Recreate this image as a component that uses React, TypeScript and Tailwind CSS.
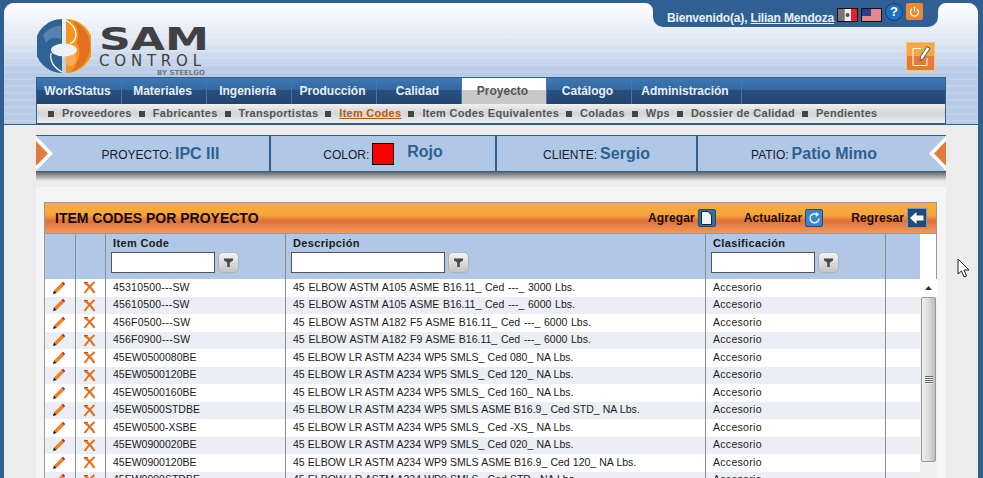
import React from "react";

const navItems = [
  { t: "WorkStatus", w: "w-[85px]" },
  { t: "Materiales", w: "w-[85px]" },
  { t: "Ingeniería", w: "w-[85px]" },
  { t: "Producción", w: "w-[85px]" },
  { t: "Calidad", w: "w-[85px]" },
  { t: "Proyecto", w: "w-[85px]", active: true },
  { t: "Catálogo", w: "w-[85px]" },
  { t: "Administración", w: "w-[110px]" },
];
const subItems = ["Proveedores", "Fabricantes", "Transportistas", "Item Codes", "Item Codes Equivalentes", "Coladas", "Wps", "Dossier de Calidad", "Pendientes"];
const rows = [
  ["45310500---SW", "45 ELBOW ASTM A105 ASME B16.11_ Ced ---_ 3000 Lbs."],
  ["45610500---SW", "45 ELBOW ASTM A105 ASME B16.11_ Ced ---_ 6000 Lbs."],
  ["456F0500---SW", "45 ELBOW ASTM A182 F5 ASME B16.11_ Ced ---_ 6000 Lbs."],
  ["456F0900---SW", "45 ELBOW ASTM A182 F9 ASME B16.11_ Ced ---_ 6000 Lbs."],
  ["45EW0500080BE", "45 ELBOW LR ASTM A234 WP5 SMLS_ Ced 080_ NA Lbs."],
  ["45EW0500120BE", "45 ELBOW LR ASTM A234 WP5 SMLS_ Ced 120_ NA Lbs."],
  ["45EW0500160BE", "45 ELBOW LR ASTM A234 WP5 SMLS_ Ced 160_ NA Lbs."],
  ["45EW0500STDBE", "45 ELBOW LR ASTM A234 WP5 SMLS ASME B16.9_ Ced STD_ NA Lbs."],
  ["45EW0500-XSBE", "45 ELBOW LR ASTM A234 WP5 SMLS_ Ced -XS_ NA Lbs."],
  ["45EW0900020BE", "45 ELBOW LR ASTM A234 WP9 SMLS_ Ced 020_ NA Lbs."],
  ["45EW0900120BE", "45 ELBOW LR ASTM A234 WP9 SMLS ASME B16.9_ Ced 120_ NA Lbs."],
  ["45EW0900STDBE", "45 ELBOW LR ASTM A234 WP9 SMLS_ Ced STD_ NA Lbs."],
];

function Logo() {
  return (
    <div className="flex items-start">
      <svg width="54" height="54" viewBox="0 0 54 54" className="mt-[16px] ml-[33px] shrink-0">
        <path d="M25 0 A27 27 0 0 0 25 54 Z" fill="#2e6396" />
        <path d="M6 16 Q14 6 24 7 L24 20 Q14 16 9 24 Z" fill="#5583ae" />
        <path d="M29 0 A27 27 0 0 1 29 54 Z" fill="#f7941d" />
        <path d="M36 2 Q44 12 40 24 Q47 36 34 53 A27 27 0 0 0 36 2 Z" fill="#e2701f" />
        <ellipse cx="33" cy="40" rx="6" ry="7" fill="#f9b678" opacity="0.7" />
        <ellipse cx="27" cy="31" rx="13" ry="6.5" fill="#eef2f8" />
        <path d="M29 1 Q42 10 38 20 Q37 23 33 24.5" stroke="#fff" strokeWidth="1.2" fill="none" />
        <path d="M14 34 Q12 46 25 53" stroke="#fff" strokeWidth="1.2" fill="none" />
      </svg>
      <div className="ml-[8px] mt-[20px] w-[106px] flex flex-col text-[#414042] font-['DejaVu_Sans',sans-serif]">
        <span className="text-[32px] h-[32px] leading-[32px] font-bold origin-left scale-x-[1.38] whitespace-nowrap">SAM</span>
        <span className="text-[15px] leading-[13px] tracking-[4.8px] whitespace-nowrap">CONTROL</span>
        <span className="text-[7px] leading-[7px] mt-[2px] font-bold text-right text-[#77787b] whitespace-nowrap">BY STEELGO</span>
      </div>
    </div>
  );
}

function FilterButton() {
  return (
    <div className="w-[21px] h-[21px] rounded-[5px] border border-[#aeb3b8] bg-gradient-to-b from-[#f4f4f4] to-[#c4c4c4] flex items-center justify-center shrink-0">
      <svg width="11" height="11" viewBox="0 0 11 11">
        <path d="M1 1.5 H10 V3.5 L6.8 5.5 V10 H4.2 V5.5 L1 3.5 Z" fill="#4a4a4a" />
      </svg>
    </div>
  );
}

function Pencil() {
  return (
    <svg width="14" height="14" viewBox="0 0 14 14">
      <path d="M2 9.5 L9.5 2 L12 4.5 L4.5 12 Z" fill="#f2801f" />
      <path d="M9.5 2 L11 .8 L13.2 3 L12 4.5 Z" fill="#a8321a" />
      <path d="M2 9.5 L1 13 L4.5 12 Z" fill="#111" />
    </svg>
  );
}
function Cross() {
  return (
    <svg width="13" height="13" viewBox="0 0 13 13">
      <path d="M1.5 1.5 Q7 5 11.5 12 M11.5 1 Q6 5.5 1.5 12" stroke="#e2701c" strokeWidth="2.1" fill="none" />
      <path d="M1 1.5 H5" stroke="#b9560f" strokeWidth="1" />
    </svg>
  );
}

function InfoCell({ label, value, cls, children }: { label: string; value: string; cls: string; children?: React.ReactNode }) {
  return (
    <div className={`${cls} h-full flex items-center justify-center gap-[3px]`}>
      <span className="text-[12px] text-[#1a1a2a] mt-[3px]">{label}</span>
      {children}
      {value ? <span className="text-[16px] font-bold text-[#2f6091]">{value}</span> : null}
    </div>
  );
}

function ToolButton({ label, children, cls }: { label: string; children: React.ReactNode; cls: string }) {
  return (
    <div className={`flex items-center gap-[3px] ${cls}`}>
      <span className="text-[12px] font-bold tracking-[0.1px] text-[#1a0a00]">{label}</span>
      {children}
    </div>
  );
}

export default function App() {
  return (
    <div className="w-[983px] h-[478px] overflow-hidden bg-[#2f6091] pl-[4px] pr-[5px] pt-[3px] font-['Liberation_Sans',Arial,sans-serif]">
      <div className="w-[974px] h-[475px] relative flex flex-col bg-[#ececec] rounded-tl-[10px] rounded-tr-[10px] overflow-hidden">
        {/* Header */}
        <div className="h-[122px] shrink-0 relative border-b border-[#2f6091] bg-[repeating-linear-gradient(transparent_0,transparent_5px,rgba(255,255,255,0.12)_5px,rgba(255,255,255,0.12)_7px),linear-gradient(#ffffff_0,#dce5f2_33%,#b8cbe6_58%,#b8cbe6_100%)]">
          <div className="h-[74px] flex justify-between">
            <Logo />
            <div className="flex flex-col items-end">
              <div className="relative mt-[-3px] mr-[40px] w-[285px] h-[27px] bg-[#2f6091] rounded-b-[10px] flex items-center pl-[14px] text-[12px] font-bold text-[#e8f0fa]">
                <svg width="8" height="8" viewBox="0 0 8 8" className="absolute left-[-8px] top-[3px]">
                  <path d="M0 0 H8 V8 A8 8 0 0 0 0 0 Z" fill="#2f6091" />
                </svg>
                <svg width="8" height="8" viewBox="0 0 8 8" className="absolute right-[-8px] top-[3px]">
                  <path d="M8 0 H0 V8 A8 8 0 0 1 8 0 Z" fill="#2f6091" />
                </svg>
                <span className="mt-[9px] whitespace-nowrap tracking-[-0.17px]">Bienvenido(a), <span className="underline">Lilian Mendoza</span></span>
                <svg width="21" height="14" viewBox="0 0 21 14" className="ml-[3px] mt-[3px] shrink-0">
                  <rect width="21" height="14" fill="#111" />
                  <rect x="1" y="1" width="6.5" height="12" fill="#777" />
                  <rect x="7.5" y="1" width="6.5" height="12" fill="#eee" />
                  <rect x="14" y="1" width="6" height="12" fill="#e81f2c" />
                  <circle cx="10.5" cy="7" r="2" fill="#6b4a3a" />
                </svg>
                <svg width="21" height="14" viewBox="0 0 21 14" className="ml-[3px] mt-[3px] shrink-0">
                  <rect width="21" height="14" fill="#111" />
                  <rect x="1" y="1" width="19" height="12" fill="#eee" />
                  <path d="M1 2 H20 M1 4 H20 M1 6 H20 M1 8 H20 M1 10 H20 M1 12 H20" stroke="#d92030" strokeWidth="1" />
                  <rect x="1" y="1" width="9" height="7" fill="#2a3f90" />
                </svg>
                <div className="ml-[3px] w-[18px] h-[18px] rounded-full bg-[#1d6fc0] border border-[#123c70] text-white text-[13px] leading-[16px] text-center shrink-0 mt-[-3px]">?</div>
                <div className="ml-[3px] w-[17px] h-[17px] rounded-[2px] bg-[#ed8a2e] flex items-center justify-center shrink-0 mt-[-4px]">
                  <svg width="11" height="11" viewBox="0 0 11 11" fill="none" stroke="#fff" strokeWidth="1.2">
                    <path d="M5.5 1 V5.5 M3 3 A4 4 0 1 0 8 3" />
                  </svg>
                </div>
              </div>
              <div className="mt-[15px] mr-[43px] w-[29px] h-[29px] border border-[#fcc36d] bg-gradient-to-b from-[#f5a742] from-50% to-[#e27c3c] to-50% flex items-center justify-center">
                <svg width="22" height="24" viewBox="0 0 22 24" fill="none">
                  <path d="M3 3.5 H11 M3 3.5 V20.5 H17 V13" stroke="#fff" strokeWidth="1" />
                  <path d="M17 1.5 L20 3.5 L13 14 L10 15.5 L10.5 11.5 Z" fill="#fff" stroke="#333" strokeWidth="0.8" />
                </svg>
              </div>
            </div>
          </div>
          {/* Nav */}
          <div className="ml-[32px] w-[910px] h-[47px] border border-[#2f6091] flex flex-col">
            <div className="h-[26px] shrink-0 flex bg-[linear-gradient(#3e78b6_0,#33689f_45%,#28507f_45%,#23466f_100%)]">
              {navItems.map((n) => (
                <div
                  key={n.t}
                  className={`${n.w} h-full pr-[3px] border-r border-[#3e78b6] flex items-center justify-center text-[12px] font-bold ${n.active ? "bg-gradient-to-b from-white from-45% to-[#c8c8c8] to-45% text-[#555]" : "text-[#e6eff9]"}`}
                >
                  {n.t}
                </div>
              ))}
            </div>
            <div className="flex-1 flex items-center bg-gradient-to-b from-[#f0f0f0] via-[#d4d4d4] to-[#efefef] pl-[11px] text-[11px] font-bold tracking-[0.28px] text-[#555]">
              {subItems.map((s) => (
                <div key={s} className="flex items-center whitespace-nowrap">
                  <span className="w-[6px] h-[6px] bg-[#444] mr-[8px]" />
                  <span className={`mr-[7px] ${s === "Item Codes" ? "text-[#b85c10] underline" : ""}`}>{s}</span>
                </div>
              ))}
            </div>
          </div>
        </div>
        {/* Info strip */}
        <div className="ml-[32px] mt-[10px] w-[910px] h-[37px] shrink-0 relative flex bg-[#b0c8e6] border-y border-[#2f6091]">
          <InfoCell label="PROYECTO:" value="IPC III" cls="w-[235px] pl-[16px] border-r-[2px] border-[#2f6091]" />
          <InfoCell label="COLOR:" value="" cls="w-[226px] border-r-[2px] border-[#2f6091]">
            <span className="w-[22px] h-[22px] bg-[#ff0000] border border-black" />
            <span className="text-[16px] font-bold text-[#2f6091] ml-[10px] mt-[-3px]">Rojo</span>
          </InfoCell>
          <InfoCell label="CLIENTE:" value="Sergio" cls="w-[201px] border-r-[2px] border-[#2f6091]" />
          <InfoCell label="PATIO:" value="Patio Mimo" cls="w-[248px] pr-[16px]" />
          <div className="absolute left-0 top-0 h-full w-[18px]">
            <svg width="18" height="35" viewBox="0 0 18 35">
              <path d="M0 0 L17 17.5 L0 35 Z" fill="#fff" />
              <path d="M0 5 L12 17.5 L0 30 Z" fill="#e27c3c" />
            </svg>
          </div>
          <div className="absolute right-0 top-0 h-full w-[18px]">
            <svg width="18" height="35" viewBox="0 0 18 35">
              <path d="M18 0 L1 17.5 L18 35 Z" fill="#fff" />
              <path d="M18 5 L6 17.5 L18 30 Z" fill="#e27c3c" />
            </svg>
          </div>
        </div>
        <div className="ml-[32px] w-[910px] h-[9px] shrink-0 bg-gradient-to-b from-[#666] to-[#ececec]" />
        {/* Panel */}
        <div className="ml-[32px] mt-[6px] w-[910px] flex-1 bg-[#f5f5f5] pt-[15px] px-[8px] overflow-hidden">
          <div className="w-[893px] border-x border-[#9a9a9a]">
            {/* Title */}
            <div className="h-[32px] border-y border-[#9a9a9a] flex items-center pl-[10px] pr-[9px] bg-[linear-gradient(#fbb03b_0,#f8a53a_40%,#e0703a_60%,#ee9a5e_100%)]">
              <span className="text-[14px] font-bold text-[#120a05] mr-auto">ITEM CODES POR PROYECTO</span>
              <ToolButton label="Agregar" cls="">
                <div className="w-[18px] h-[18px] rounded-[2px] bg-[#2f6fb0] border border-[#1f4a7a] flex items-center justify-center">
                  <svg width="11" height="14" viewBox="0 0 11 14"><path d="M0.5 0.5 H7 L10.5 4 V13.5 H0.5 Z" fill="#f2f2f2" stroke="#222" strokeWidth="1" /></svg>
                </div>
              </ToolButton>
              <ToolButton label="Actualizar" cls="ml-[28px]">
                <div className="w-[18px] h-[18px] rounded-[2px] bg-[#3d84cc] border border-[#1f4a7a] flex items-center justify-center">
                  <svg width="13" height="13" viewBox="0 0 13 13" fill="none" stroke="#e8f2fb" strokeWidth="1.5"><path d="M11 6.5 A4.5 4.5 0 1 1 9 2.6" /><path d="M8 .5 L11 2.5 L8 4.5 Z" fill="#e8f2fb" strokeWidth="0.5" /></svg>
                </div>
              </ToolButton>
              <ToolButton label="Regresar" cls="ml-[28px]">
                <div className="w-[20px] h-[20px] bg-[#1f4a7a] border border-[#6e9ccc] flex items-center justify-center">
                  <svg width="14" height="12" viewBox="0 0 14 12"><path d="M0 6 L6.5 0 V3.5 H13.5 V8.5 H6.5 V12 Z" fill="#fff" /></svg>
                </div>
              </ToolButton>
            </div>
            {/* Table header */}
            <div className="h-[45px] flex bg-white">
              <div className="w-[875px] flex bg-[#b0c8e6] text-[11px] font-bold text-[#1a1a1a] tracking-[0.35px]">
                <div className="w-[31px] border-r border-[#8c8c8c]" />
                <div className="w-[30px] border-r border-[#8c8c8c]" />
                <div className="w-[180px] border-r border-[#8c8c8c] pl-[5px] pt-[1px]">
                  <div className="leading-[16px] h-[17px] pl-[2px]">Item Code</div>
                  <div className="flex items-center gap-[3px]">
                    <div className="w-[104px] h-[21px] bg-white border border-[#555]" />
                    <FilterButton />
                  </div>
                </div>
                <div className="w-[420px] border-r border-[#8c8c8c] pl-[5px] pt-[1px]">
                  <div className="leading-[16px] h-[17px] pl-[2px]">Descripción</div>
                  <div className="flex items-center gap-[3px]">
                    <div className="w-[154px] h-[21px] bg-white border border-[#555]" />
                    <FilterButton />
                  </div>
                </div>
                <div className="w-[180px] border-r border-[#8c8c8c] pl-[5px] pt-[1px]">
                  <div className="leading-[16px] h-[17px] pl-[2px]">Clasificación</div>
                  <div className="flex items-center gap-[3px]">
                    <div className="w-[104px] h-[21px] bg-white border border-[#555]" />
                    <FilterButton />
                  </div>
                </div>
              </div>
            </div>
            {/* Body */}
            <div className="flex">
              <div className="w-[875px] shrink-0 text-[10.5px] text-[#1a1a1a]">
                {rows.map((r, i) => (
                  <div key={r[0]} className={`h-[17.5px] flex ${i % 2 ? "bg-[#ebeef4]" : "bg-white"}`}>
                    <div className="w-[31px] pr-[2px] border-r border-[#8c8c8c] flex items-center justify-center"><Pencil /></div>
                    <div className="w-[30px] pr-[2px] border-r border-[#8c8c8c] flex items-center justify-center"><Cross /></div>
                    <div className={`w-[180px] border-r border-[#8c8c8c] pl-[7px] flex items-center ${r[0].includes("---") ? "tracking-[0.2px]" : ""}`}>{r[0]}</div>
                    <div className={`w-[420px] border-r border-[#8c8c8c] pl-[7px] flex items-center ${r[1].includes("---") ? "[word-spacing:0.8px]" : "[word-spacing:0.2px]"}`}>{r[1]}</div>
                    <div className="w-[180px] border-r border-[#8c8c8c] pl-[7px] flex items-center tracking-[0.3px]">Accesorio</div>
                    <div className="flex-1" />
                  </div>
                ))}
              </div>
              {/* Scrollbar */}
              <div className="w-[17px] h-[199px] shrink-0 bg-[#f0f0f0] flex flex-col items-center">
                <div className="h-[18px] w-full bg-white flex items-center justify-center">
                  <svg width="7" height="4" viewBox="0 0 7 4"><path d="M3.5 0 L7 4 H0 Z" fill="#333" /></svg>
                </div>
                <div className="w-[15px] h-[165px] border border-[#999] rounded-[2px] bg-gradient-to-r from-[#f0f0f0] via-[#dcdcdc] to-[#bdbdbd] flex items-center justify-center">
                  <div className="w-[8px] h-[8px] bg-[repeating-linear-gradient(#666_0,#666_1px,#eee_1px,#eee_2px)]" />
                </div>
              </div>
            </div>
          </div>
        </div>
        {/* Cursor */}
        <svg width="15" height="21" viewBox="0 0 15 21" className="absolute left-[953px] top-[255px]">
          <path d="M1 1 V16 L4.5 13 L7 19 L9.5 18 L7 12 L12 12 Z" fill="#fff" stroke="#222" strokeWidth="1" />
        </svg>
      </div>
    </div>
  );
}
